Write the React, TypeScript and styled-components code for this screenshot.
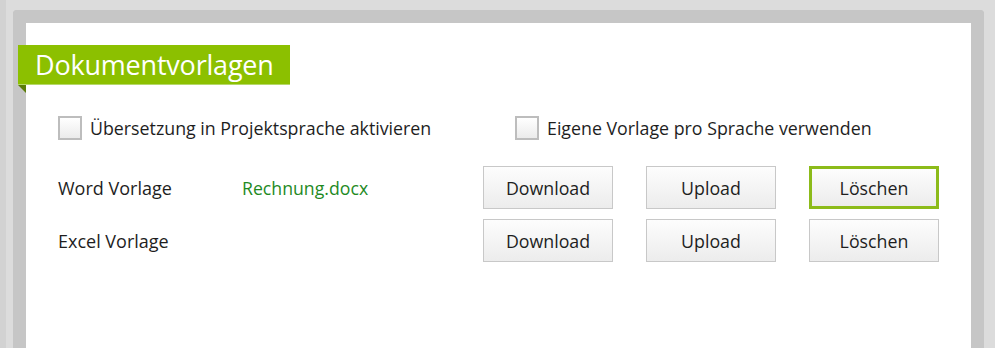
import styled, { createGlobalStyle } from 'styled-components'

const GlobalStyle = createGlobalStyle`
  html, body {
    margin: 0;
    padding: 0;
    background: #dcdcdc;
    font-family: "Open Sans", "Liberation Sans", sans-serif;
    color: #1e1e1e;
  }
`

const rows = [
  { label: 'Word Vorlage', file: 'Rechnung.docx', focused: true },
  { label: 'Excel Vorlage', file: '', focused: false },
]

export default function App(): JSX.Element {
  return (
    <>
      <GlobalStyle />
      <Page>
        <Rail />
        <Panel>
          <Content>
            <Banner>
              <BannerTitle>Dokumentvorlagen</BannerTitle>
              <Fold />
            </Banner>
            <OptionRow>
              <CheckLabel>
                <CheckBox type="checkbox" />
                <span>Übersetzung in Projektsprache aktivieren</span>
              </CheckLabel>
              <CheckLabel>
                <CheckBox type="checkbox" />
                <span>Eigene Vorlage pro Sprache verwenden</span>
              </CheckLabel>
            </OptionRow>
            <TemplateList>
              {rows.map((row) => (
                <TemplateRow key={row.label}>
                  <RowLabel>{row.label}</RowLabel>
                  <FileName>{row.file}</FileName>
                  <ButtonGroup>
                    <ActionButton>Download</ActionButton>
                    <ActionButton>Upload</ActionButton>
                    <ActionButton $focused={row.focused}>Löschen</ActionButton>
                  </ButtonGroup>
                </TemplateRow>
              ))}
            </TemplateList>
          </Content>
        </Panel>
      </Page>
    </>
  )
}

const Page = styled.div`
  display: flex;
  height: 348px;
  overflow: hidden;
`

const Rail = styled.div`
  width: 6px;
  flex: none;
  background: #d2d2d2;
  margin-right: 7px;
`

const Panel = styled.div`
  margin-top: 10px;
  width: 945px;
  flex: none;
  border: 13px solid #c6c6c6;
  border-bottom: none;
  border-radius: 4px 4px 0 0;
  background: #fff;
`

const Content = styled.div`
  padding-top: 22px;
  height: 400px;
`

const Banner = styled.div`
  position: relative;
  margin-left: -8px;
  width: 272px;
  height: 40px;
  background: #8cc000;
  border-bottom: 1px solid #b5d86a;
  box-sizing: border-box;
`

const BannerTitle = styled.div`
  padding-left: 17px;
  color: #fff;
  font-size: 27px;
  line-height: 39px;
  letter-spacing: -0.2px;
`

const Fold = styled.div`
  position: absolute;
  left: 0;
  top: 40px;
  width: 8px;
  height: 8px;
  background: #5b7d08;
  clip-path: polygon(0 0, 100% 0, 100% 100%);
`

const OptionRow = styled.div`
  display: grid;
  grid-template-columns: 457px auto;
  padding-left: 32px;
  margin-top: 31px;
`

const CheckLabel = styled.label`
  display: flex;
  align-items: center;
  gap: 8px;
  font-size: 17.8px;
  height: 24px;
`

const CheckBox = styled.input`
  appearance: none;
  margin: 0;
  width: 24px;
  height: 24px;
  border: 2px solid #bdbdbd;
  box-sizing: border-box;
  background: linear-gradient(#ffffff, #ebebeb);
`

const TemplateList = styled.div`
  display: flex;
  flex-direction: column;
  gap: 10px;
  margin-top: 26px;
  padding-left: 32px;
`

const TemplateRow = styled.div`
  display: grid;
  grid-template-columns: 184px 241px auto;
  align-items: center;
  height: 43px;
`

const RowLabel = styled.div`
  font-size: 18px;
`

const FileName = styled.div`
  font-size: 17.7px;
  color: #1f8a1f;
`

const ButtonGroup = styled.div`
  display: flex;
  gap: 33px;
`

const ActionButton = styled.button<{ $focused?: boolean }>`
  width: 130px;
  height: 43px;
  box-sizing: border-box;
  border: ${(p) => (p.$focused ? '3px solid #8cbb1a' : '1px solid #c8c8c8')};
  background: linear-gradient(#fdfdfd, #ececec);
  font-family: inherit;
  font-size: 17.8px;
  color: #1e1e1e;
  padding: 0;
  cursor: pointer;
`
